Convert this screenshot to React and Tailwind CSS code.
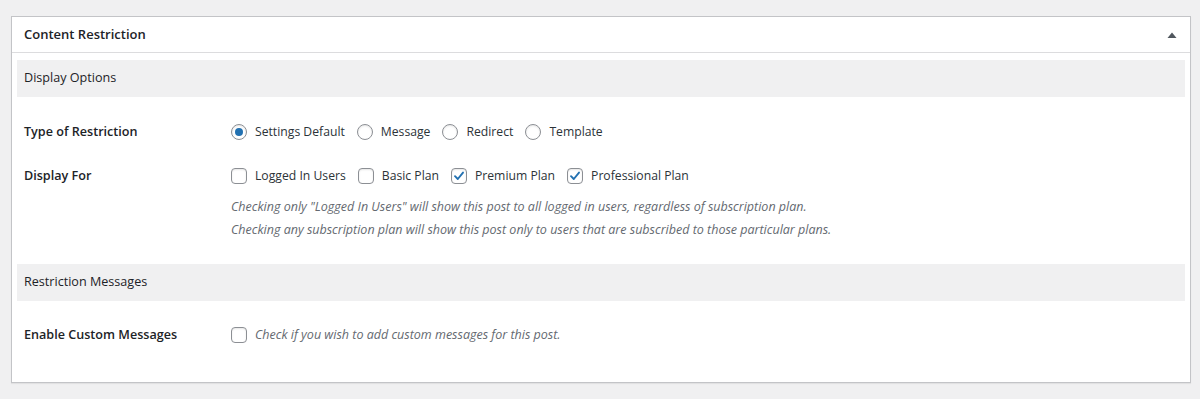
import React from 'react'

const font = { fontFamily: '"Open Sans", "Noto Sans", sans-serif' }

function Radio({ checked, label }) {
  return (
    <label className="flex items-center mr-[12px]">
      <span className="w-[16px] h-[16px] rounded-full border border-[#8c8f94] bg-white flex items-center justify-center mr-[8px] shadow-[inset_0_1px_2px_rgba(0,0,0,0.1)]">
        {checked && <span className="w-[8px] h-[8px] rounded-full bg-[#2271b1]" />}
      </span>
      <span>{label}</span>
    </label>
  )
}

function Check({ checked, label, italic }) {
  return (
    <label className="flex items-center mr-[12px]">
      <span className="w-[16px] h-[16px] rounded-[4px] border border-[#8c8f94] bg-white flex items-center justify-center mr-[8px] shadow-[inset_0_1px_2px_rgba(0,0,0,0.1)]">
        {checked && (
          <svg width="14" height="14" viewBox="0 0 14 14">
            <path d="M3 7.2 L5.8 10 L11 3.6" fill="none" stroke="#2271b1" strokeWidth="1.9" strokeLinecap="round" strokeLinejoin="round" />
          </svg>
        )}
      </span>
      <span className={italic ? 'italic text-[#646970]' : ''}>{label}</span>
    </label>
  )
}

function Band({ children }) {
  return (
    <div className="h-[37px] bg-[#f0f0f1] flex items-center pl-[7px] text-[12.6px] text-[#1d2327]">
      {children}
    </div>
  )
}

export default function App() {
  return (
    <div className="min-h-screen bg-[#f0f0f1] pt-[16px] text-[12.2px] text-[#2c3338]" style={font}>
      <div className="ml-[11px] w-[1180px] bg-white border border-[#c3c4c7] shadow-[0_1px_1px_rgba(0,0,0,0.06)]">
        {/* header */}
        <div className="h-[36px] border-b border-[#dcdcde] flex items-center justify-between pl-[12px] pr-[13px]">
          <h2 className="text-[13px] font-semibold text-[#1d2327]">Content Restriction</h2>
          <svg width="10" height="6" viewBox="0 0 10 6">
            <path d="M0.5 6 L5 0.5 L9.5 6 Z" fill="#50575e" />
          </svg>
        </div>

        <div className="pl-[5px] pr-[5px] pt-[7px] pb-[36px]">
          <Band>Display Options</Band>

          <div className="pl-[7px]">
            <div className="flex items-center h-[22px] mt-[24px]">
              <div className="w-[207px] font-semibold text-[12.6px] text-[#1d2327]">Type of Restriction</div>
              <div className="flex items-center">
                <Radio checked label="Settings Default" />
                <Radio label="Message" />
                <Radio label="Redirect" />
                <Radio label="Template" />
              </div>
            </div>

            <div className="flex items-center h-[22px] mt-[22px]">
              <div className="w-[207px] font-semibold text-[12.6px] text-[#1d2327]">Display For</div>
              <div className="flex items-center">
                <Check label="Logged In Users" />
                <Check label="Basic Plan" />
                <Check checked label="Premium Plan" />
                <Check checked label="Professional Plan" />
              </div>
            </div>

            <div className="ml-[207px] mt-[8px] italic text-[#646970] leading-[23px] text-[12.5px]">
              <p>Checking only "Logged In Users" will show this post to all logged in users, regardless of subscription plan.</p>
              <p>Checking any subscription plan will show this post only to users that are subscribed to those particular plans.</p>
            </div>
          </div>

          <div className="mt-[23px]">
            <Band>Restriction Messages</Band>
          </div>

          <div className="pl-[7px] flex items-center h-[22px] mt-[23px]">
            <div className="w-[207px] font-semibold text-[12.6px] text-[#1d2327]">Enable Custom Messages</div>
            <div className="flex items-center text-[12.5px]">
              <Check italic label="Check if you wish to add custom messages for this post." />
            </div>
          </div>
        </div>
      </div>
    </div>
  )
}
